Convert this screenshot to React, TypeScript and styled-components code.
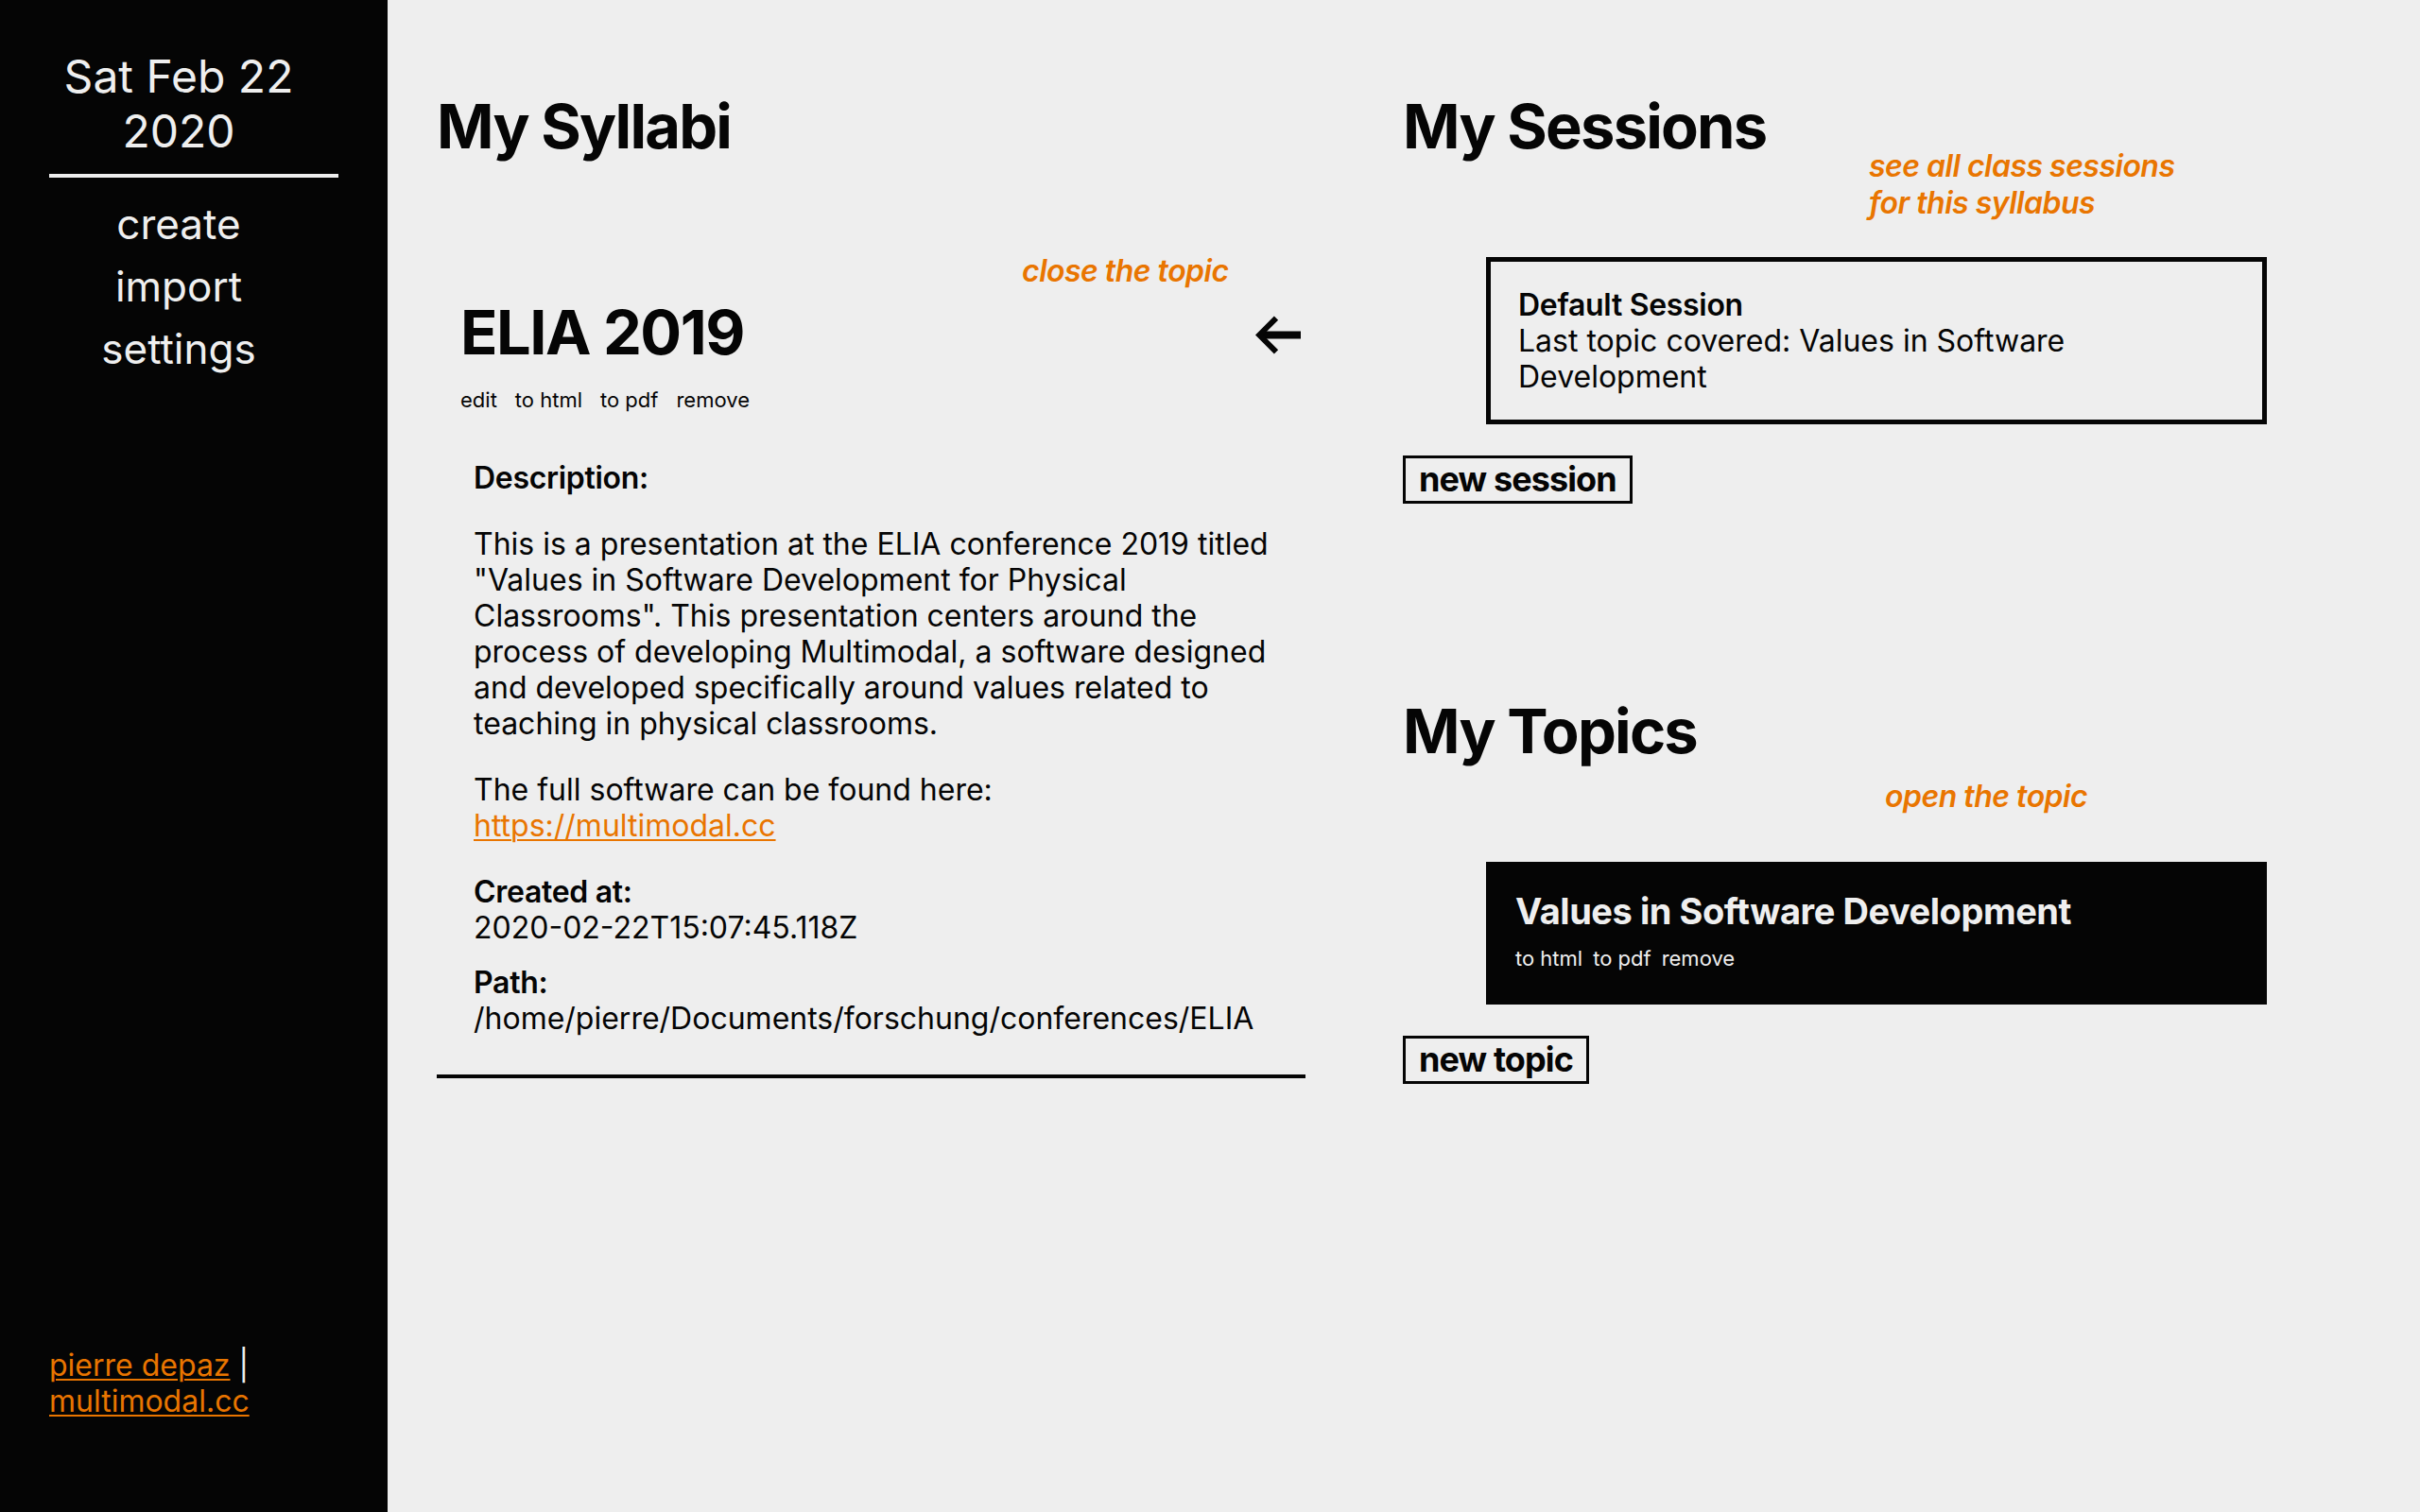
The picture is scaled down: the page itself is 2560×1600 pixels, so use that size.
import React from "react";
import styled, { createGlobalStyle } from "styled-components";

const ORANGE = "#e97500";
const INK = "#050505";
const PAPER = "#eeeeee";
const LIGHT = "#efefef";

const GlobalStyle = createGlobalStyle`
  html, body { margin: 0; padding: 0; }
  body {
    background: ${PAPER};
    color: ${INK};
    font-family: Inter, "Noto Sans", "Liberation Sans", sans-serif;
  }
  * { box-sizing: border-box; }
`;

const Layout = styled.div`
  display: grid;
  grid-template-columns: 410px 1fr;
  min-height: 100vh;
`;

const Sidebar = styled.aside`
  background: ${INK};
  color: ${LIGHT};
  display: flex;
  flex-direction: column;
  padding: 52px 52px 98px;
`;

const DateBlock = styled.div`
  font-size: 48px;
  line-height: 57.6px;
  text-align: center;
  padding-right: 32px;
`;

const SideRule = styled.hr`
  margin: 17px 0 0;
  border: none;
  height: 4px;
  background: ${LIGHT};
`;

const Nav = styled.nav`
  margin-top: 16px;
  padding-right: 32px;
  display: flex;
  flex-direction: column;
  align-items: center;
  font-size: 44px;
  line-height: 66px;
`;

const NavLink = styled.a`
  color: inherit;
  text-decoration: none;
  cursor: pointer;
`;

const Footer = styled.footer`
  margin-top: auto;
  font-size: 32px;
  line-height: 38px;
`;

const OrangeLink = styled.a`
  color: ${ORANGE};
  text-decoration: underline;
  text-underline-offset: 3px;
  text-decoration-thickness: 2px;
`;

const Main = styled.main`
  display: grid;
  grid-template-columns: 1022px 1fr;
  padding: 94px 52px 0 52px;
  align-items: start;
`;

const Column = styled.section`
  display: flex;
  flex-direction: column;
  align-items: flex-start;
`;

const PageTitle = styled.h1`
  margin: 0;
  font-size: 65px;
  line-height: 79px;
  font-weight: 700;
  letter-spacing: -1.8px;
`;

const SyllabusPanel = styled.article`
  position: relative;
  width: 919px;
  margin-top: 139px;
  padding-bottom: 40px;
  border-bottom: 4px solid ${INK};
`;

const PanelHeader = styled.header`
  display: flex;
  justify-content: space-between;
  align-items: center;
  padding: 0 5px 0 25px;
`;

const SyllabusTitle = styled.h2`
  margin: 0;
  font-size: 65px;
  line-height: 79px;
  font-weight: 700;
  letter-spacing: -1.5px;
`;

const ArrowButton = styled.button`
  margin-top: 6px;
  padding: 0;
  border: none;
  background: none;
  display: flex;
  cursor: pointer;
`;

const Hint = styled.div<{ $top: number; $left: number }>`
  position: absolute;
  top: ${(p) => p.$top}px;
  left: ${(p) => p.$left}px;
  color: ${ORANGE};
  font-style: italic;
  font-weight: 600;
  font-size: 32px;
  line-height: 38.5px;
  letter-spacing: -0.5px;
  white-space: nowrap;
`;

const ActionRow = styled.div<{ $gap: number; $indent: number; $top: number }>`
  display: flex;
  gap: ${(p) => p.$gap}px;
  margin-top: ${(p) => p.$top}px;
  padding-left: ${(p) => p.$indent}px;
  font-size: 22px;
  line-height: 27px;
`;

const Action = styled.a`
  color: inherit;
  text-decoration: none;
  cursor: pointer;
`;

const Details = styled.div`
  margin: 50px 0 0 39px;
  padding-right: 25px;
  font-size: 32px;
  line-height: 38px;
`;

const FieldLabel = styled.div`
  font-weight: 600;
  letter-spacing: -0.3px;
`;

const Paragraph = styled.p<{ $top: number }>`
  margin: ${(p) => p.$top}px 0 0;
`;

const Field = styled.div<{ $top: number }>`
  margin-top: ${(p) => p.$top}px;
`;

const Section = styled.div<{ $top: number }>`
  position: relative;
  display: flex;
  flex-direction: column;
  align-items: flex-start;
  margin-top: ${(p) => p.$top}px;
`;

const SessionCard = styled.div`
  margin: 99px 0 0 88px;
  width: 826px;
  border: 5px solid ${INK};
  padding: 27px 80px 26px 29px;
  font-size: 32px;
  line-height: 38px;
`;

const SessionName = styled.div`
  font-weight: 600;
  letter-spacing: -0.3px;
`;

const TopicCard = styled.div`
  margin: 99px 0 0 88px;
  width: 826px;
  background: ${INK};
  color: ${LIGHT};
  padding: 29px 31px 35px;
`;

const TopicTitle = styled.h3`
  margin: 0 0 14px;
  font-size: 38px;
  line-height: 46px;
  font-weight: 700;
  letter-spacing: -0.45px;
`;

const NewButton = styled.button`
  margin-top: 33px;
  border: 3px solid ${INK};
  background: transparent;
  color: ${INK};
  font-family: inherit;
  font-size: 36px;
  line-height: 45px;
  font-weight: 700;
  letter-spacing: -0.9px;
  padding: 0 14px;
  cursor: pointer;
`;

const BackArrow = () => (
  <svg width="48" height="42" viewBox="0 0 48 42" aria-hidden="true">
    <path d="M48 20.5H6" stroke={INK} strokeWidth="8" fill="none" />
    <path
      d="M22 2.7 4.2 20.5 22 38.3"
      stroke={INK}
      strokeWidth="6"
      fill="none"
      strokeLinejoin="miter"
      strokeLinecap="butt"
    />
  </svg>
);

export default function App() {
  return (
    <>
      <GlobalStyle />
      <Layout>
        <Sidebar>
          <DateBlock>
            Sat Feb 22
            <br />
            2020
          </DateBlock>
          <SideRule />
          <Nav>
            <NavLink>create</NavLink>
            <NavLink>import</NavLink>
            <NavLink>settings</NavLink>
          </Nav>
          <Footer>
            <OrangeLink>pierre depaz</OrangeLink> | <OrangeLink>multimodal.cc</OrangeLink>
          </Footer>
        </Sidebar>

        <Main>
          <Column>
            <PageTitle>My Syllabi</PageTitle>
            <SyllabusPanel>
              <Hint $top={-44} $left={619}>
                close the topic
              </Hint>
              <PanelHeader>
                <SyllabusTitle>ELIA 2019</SyllabusTitle>
                <ArrowButton aria-label="close the topic">
                  <BackArrow />
                </ArrowButton>
              </PanelHeader>
              <ActionRow $gap={19} $indent={25} $top={19}>
                <Action>edit</Action>
                <Action>to html</Action>
                <Action>to pdf</Action>
                <Action>remove</Action>
              </ActionRow>
              <Details>
                <FieldLabel>Description:</FieldLabel>
                <Paragraph $top={32}>
                  This is a presentation at the ELIA conference 2019 titled "Values in Software
                  Development for Physical Classrooms". This presentation centers around the process
                  of developing Multimodal, a software designed and developed specifically around
                  values related to teaching in physical classrooms.
                </Paragraph>
                <Paragraph $top={32}>
                  The full software can be found here:
                  <br />
                  <OrangeLink>https://multimodal.cc</OrangeLink>
                </Paragraph>
                <Field $top={32}>
                  <FieldLabel>Created at:</FieldLabel>
                  <div>2020-02-22T15:07:45.118Z</div>
                </Field>
                <Field $top={20}>
                  <FieldLabel>Path:</FieldLabel>
                  <div>/home/pierre/Documents/forschung/conferences/ELIA</div>
                </Field>
              </Details>
            </SyllabusPanel>
          </Column>

          <Column>
            <Section $top={0}>
              <PageTitle>My Sessions</PageTitle>
              <Hint $top={63} $left={493}>
                see all class sessions
                <br />
                for this syllabus
              </Hint>
              <SessionCard>
                <SessionName>Default Session</SessionName>
                <div>Last topic covered: Values in Software Development</div>
              </SessionCard>
              <NewButton>new session</NewButton>
            </Section>

            <Section $top={201}>
              <PageTitle>My Topics</PageTitle>
              <Hint $top={90} $left={510}>
                open the topic
              </Hint>
              <TopicCard>
                <TopicTitle>Values in Software Development</TopicTitle>
                <ActionRow $gap={11} $indent={0} $top={0}>
                  <Action>to html</Action>
                  <Action>to pdf</Action>
                  <Action>remove</Action>
                </ActionRow>
              </TopicCard>
              <NewButton>new topic</NewButton>
            </Section>
          </Column>
        </Main>
      </Layout>
    </>
  );
}
